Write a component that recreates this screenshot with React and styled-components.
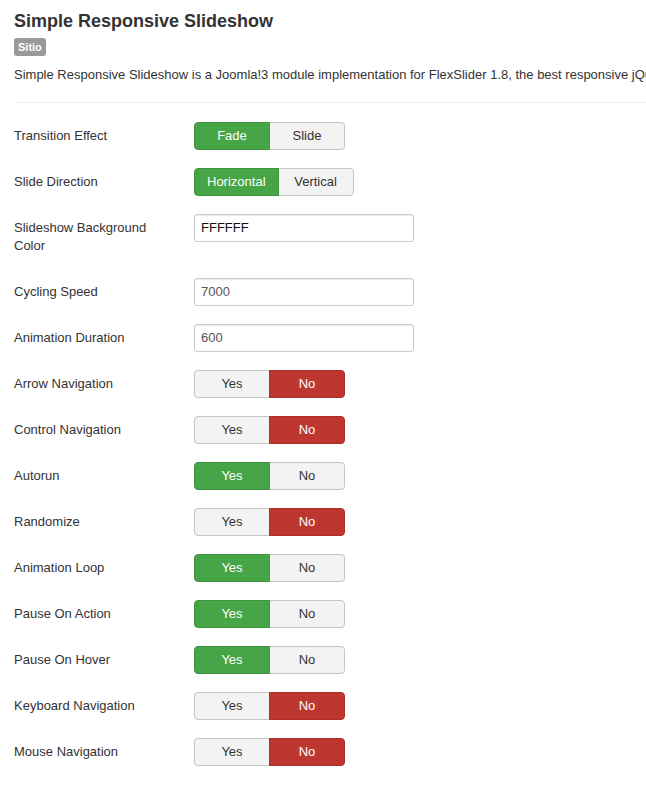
import React from "react";
import styled, { createGlobalStyle } from "styled-components";

const Global = createGlobalStyle`
  html, body { margin: 0; padding: 0; background: #fff; }
  body {
    font-family: "Liberation Sans", Arial, sans-serif;
    font-size: 13px;
    line-height: 18px;
    color: #333;
    overflow: hidden;
  }
`;

const Page = styled.div`
  width: 646px;
  overflow: hidden;
  padding: 10px 0 0 14px;
  box-sizing: border-box;
`;

const Title = styled.h2`
  margin: 0;
  font-size: 18px;
  line-height: 22px;
  font-weight: bold;
  color: #333;
`;

const Badge = styled.span`
  display: inline-block;
  margin-top: 6px;
  padding: 2px 4px;
  font-size: 11px;
  line-height: 14px;
  font-weight: bold;
  color: #fff;
  background: #999;
  border-radius: 3px;
  vertical-align: top;
`;

const BadgeRow = styled.div`
  height: 24px;
  line-height: 14px;
`;

const Description = styled.p`
  margin: 10px 0 0;
  white-space: nowrap;
  color: #333;
`;

const Rule = styled.hr`
  margin: 18px 0;
  width: 700px;
  border: 0;
  border-top: 1px solid #eee;
  border-bottom: 1px solid #fff;
`;

const Group = styled.div`
  display: flex;
  align-items: flex-start;
  margin-bottom: 18px;
`;

const Label = styled.label`
  width: 160px;
  padding: 5px 0;
  margin-right: 20px;
  line-height: 18px;
  color: #333;
`;

const ButtonGroup = styled.div`
  display: flex;
`;

const tones = {
  success: { bg: "#46a546", border: "#3f943f", color: "#fff" },
  danger: { bg: "#bd362f", border: "#a9302a", color: "#fff" },
  off: { bg: "#f3f3f3", border: "#c4c4c4", color: "#333" },
};

const Btn = styled.span`
  box-sizing: border-box;
  min-width: 76px;
  height: 28px;
  padding: 4px 12px;
  text-align: center;
  font-size: 13px;
  line-height: 18px;
  background: ${(p) => tones[p.$tone].bg};
  color: ${(p) => tones[p.$tone].color};
  border: 1px solid ${(p) => tones[p.$tone].border};
  &:first-child {
    border-radius: 4px 0 0 4px;
  }
  &:last-child {
    border-radius: 0 4px 4px 0;
    margin-left: -1px;
  }
  ${(p) => p.$tone !== "off" && "position: relative; z-index: 1;"}
`;

const Input = styled.div`
  box-sizing: border-box;
  width: 220px;
  height: 28px;
  padding: 4px 6px;
  font-size: 13px;
  line-height: 18px;
  color: ${(p) => (p.$strong ? "#111" : "#555")};
  border: 1px solid #ccc;
  border-radius: 3px;
  background: #fff;
  box-shadow: inset 0 1px 1px rgba(0, 0, 0, 0.075);
`;

const fields = [
  { label: "Transition Effect", options: ["Fade", "Slide"], active: 0 },
  { label: "Slide Direction", options: ["Horizontal", "Vertical"], active: 0 },
  { label: "Slideshow Background Color", input: "FFFFFF", strong: true },
  { label: "Cycling Speed", input: "7000" },
  { label: "Animation Duration", input: "600" },
  { label: "Arrow Navigation", yesno: false },
  { label: "Control Navigation", yesno: false },
  { label: "Autorun", yesno: true },
  { label: "Randomize", yesno: false },
  { label: "Animation Loop", yesno: true },
  { label: "Pause On Action", yesno: true },
  { label: "Pause On Hover", yesno: true },
  { label: "Keyboard Navigation", yesno: false },
  { label: "Mouse Navigation", yesno: false },
];

function Control({ f }) {
  if (f.input !== undefined) {
    return <Input $strong={f.strong}>{f.input}</Input>;
  }
  if (f.options) {
    return (
      <ButtonGroup>
        {f.options.map((o, i) => (
          <Btn key={o} $tone={i === f.active ? "success" : "off"}>
            {o}
          </Btn>
        ))}
      </ButtonGroup>
    );
  }
  return (
    <ButtonGroup>
      <Btn $tone={f.yesno ? "success" : "off"}>Yes</Btn>
      <Btn $tone={f.yesno ? "off" : "danger"}>No</Btn>
    </ButtonGroup>
  );
}

export default function App() {
  return (
    <>
      <Global />
      <Page>
        <Title>Simple Responsive Slideshow</Title>
        <BadgeRow>
          <Badge>Sitio</Badge>
        </BadgeRow>
        <Description>
          Simple Responsive Slideshow is a Joomla!3 module implementation for
          FlexSlider 1.8, the best responsive jQuery slider plugin.
        </Description>
        <Rule />
        {fields.map((f) => (
          <Group key={f.label}>
            <Label>{f.label}</Label>
            <Control f={f} />
          </Group>
        ))}
      </Page>
    </>
  );
}
